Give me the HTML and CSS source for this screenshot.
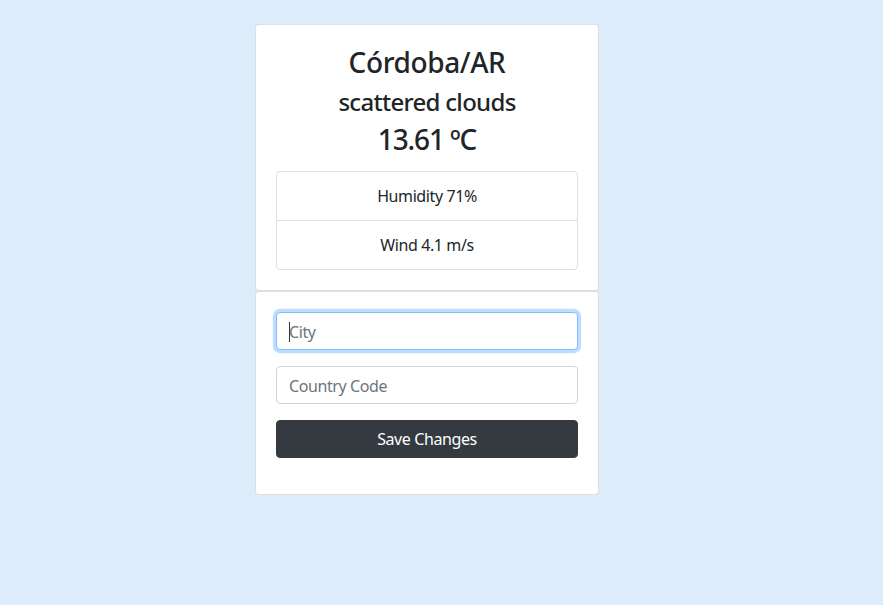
FILE: index.html
```html
<!DOCTYPE html>
<html lang="en">
<head>
<meta charset="utf-8">
<title>Weather</title>
<link rel="stylesheet" href="styles.css">
</head>
<body>
<main class="page">
  <section class="card">
    <div class="card-body center">
      <h3 class="title">Córdoba/AR</h3>
      <h4 class="desc">scattered clouds</h4>
      <h3 class="temp">13.61 ºC</h3>
      <ul class="list-group">
        <li class="list-item">Humidity 71%</li>
        <li class="list-item">Wind 4.1 m/s</li>
      </ul>
    </div>
  </section>
  <section class="card">
    <form class="card-body">
      <div class="form-group field">
        <input class="form-control is-focused" type="text" placeholder="City">
        <span class="caret"></span>
      </div>
      <div class="form-group">
        <input class="form-control" type="text" placeholder="Country Code">
      </div>
      <div class="form-group">
        <button class="btn" type="button">Save Changes</button>
      </div>
    </form>
  </section>
</main>
</body>
</html>
```
FILE: styles.css
```css
* { box-sizing: border-box; }
html, body { margin: 0; padding: 0; }
body {
  background: #dcecfb;
  font-family: "Noto Sans", "Open Sans", sans-serif;
  font-size: 16px;
  line-height: 1.5;
  letter-spacing: -0.4px;
  color: #212529;
  min-height: 605px;
}
.page {
  width: 344px;
  margin: 24px 0 0 255px;
  display: flex;
  flex-direction: column;
}
.card {
  background: #fff;
  border: 1px solid rgba(0,0,0,.125);
  border-radius: 4px;
}
.card-body { padding: 20px; display: flex; flex-direction: column; }
.center { text-align: center; }
.title, .desc, .temp { font-weight: 500; line-height: 1.2; margin: 0; }
.title { font-size: 28px; margin-top: 1px; margin-bottom: 8px; letter-spacing: -0.4px; }
.desc { font-size: 24px; margin-bottom: 7px; letter-spacing: -0.7px; }
.temp { font-size: 28px; margin-bottom: 14px; letter-spacing: -1.1px; }
.list-group {
  list-style: none;
  margin: 0; padding: 0;
  border: 1px solid rgba(0,0,0,.125);
  border-radius: 4px;
}
.list-item { padding: 12px 20px; line-height: 24px; }
.list-item + .list-item { border-top: 1px solid rgba(0,0,0,.125); }
.form-group { margin-bottom: 16px; }
.field { position: relative; }
.form-control {
  display: block;
  width: 100%;
  height: 38px;
  padding: 7px 12px 5px;
  font: inherit;
  letter-spacing: inherit;
  color: #495057;
  background: #fff;
  border: 1px solid #ced4da;
  border-radius: 4px;
  outline: none;
}
.form-control::placeholder { color: #6c757d; opacity: 1; }
.form-control.is-focused {
  border-color: #80bdff;
  box-shadow: 0 0 0 3.2px rgba(0,123,255,.25);
}
.caret {
  position: absolute;
  left: 13px;
  top: 10px;
  width: 1px;
  height: 20px;
  background: #333;
}
.btn {
  display: block;
  width: 100%;
  height: 38px;
  padding: 6px 12px;
  font: inherit;
  letter-spacing: inherit;
  color: #fff;
  background: #343a40;
  border: 1px solid #343a40;
  border-radius: 4px;
}
```
